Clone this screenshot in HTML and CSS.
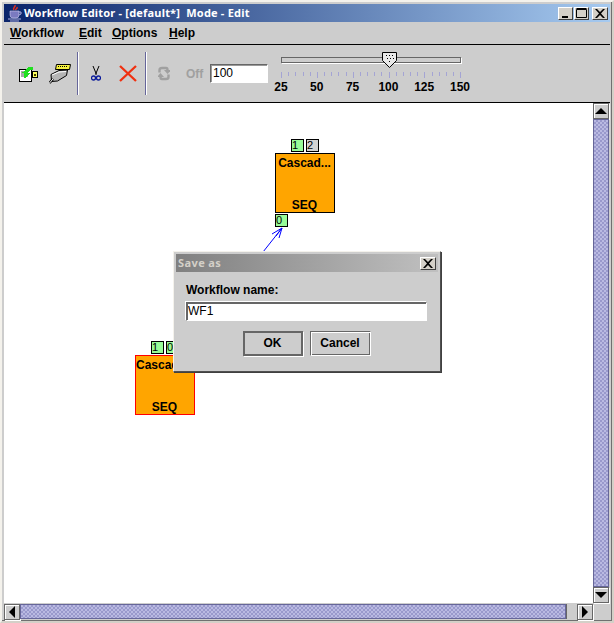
FILE: index.html
```html
<!DOCTYPE html>
<html>
	<head>
		<meta charset="UTF-8">
		<title>Workflow Editor</title>
		<link rel="stylesheet" href="styles.css">
	</head>
	<body>
		<div class="window">
			<div class="titlebar">
				<svg class="java-logo" width="16" height="18" viewBox="0 0 16 18">
					<path d="M8 1c1 2-3 3-1 5M10 3c1 2-2 2-1 3" fill="none" stroke="#e03020" stroke-width="1.500"/>
					<path d="M3 7h9v4q0 3-3 3H6q-3 0-3-3z" fill="#7a7ac0" stroke="#d0d0f0" stroke-width=".6"/>
					<path d="M12 8h2v2l-2 1M1 15h13M3 17h9" fill="none" stroke="#b0b0e0"/>
				</svg>
				<span class="title-text">Workflow Editor - [default*]&nbsp; Mode - Edit</span>
				<div class="win-btns">
					<div class="win-btn"><svg width="10" height="9" viewBox="0 0 10 9"><path d="M1 7h6v2H1z"/></svg></div>
					<div class="win-btn max"><svg width="11" height="10" viewBox="0 0 11 10"><path d="M.5 1.500h10v8H.5zM.5.500h10" fill="none" stroke="#000"/></svg></div>
					<div class="win-btn close"><svg width="10" height="9" viewBox="0 0 10 9"><path d="M0 0h2l3 3 3-3h2L6 4.500 10 9H8L5 6 2 9H0l4-4.500z"/></svg></div>
				</div>
			</div>

			<div class="menubar">
				<span class="menu"><u>W</u>orkflow</span>
				<span class="menu"><u>E</u>dit</span>
				<span class="menu"><u>O</u>ptions</span>
				<span class="menu"><u>H</u>elp</span>
			</div>

			<div class="toolbar">
				<div class="tool">
					<svg width="19" height="18" viewBox="0 0 19 18" shape-rendering="crispEdges">
						<path d="M.5 4.500h12v12H.5z" fill="#fff" stroke="#000"/>
						<path d="M2 6h7v6H2z" fill="#a8a8a8"/>
						<path d="M13.500 6.500h5v6h-5z" fill="#ffff60" stroke="#000"/>
						<path d="M15 8.500h2v2h-2z" fill="#404000"/>
						<path d="M5 13V8H3V7h2V6h1V5h1V4h1V3h1V2h5v3H11v1H10v1H9v1h2v1H10v1H9v1H8v1H7v1z" fill="#20e020" shape-rendering="crispEdges"/>
					</svg>
				</div>
				<div class="tool">
					<svg width="22" height="20" viewBox="0 0 22 20">
						<path d="M7.500.500h14l-1 5h-14z" fill="#f4f040" stroke="#000"/>
						<path d="M9 2.500h1M11 2.500h1M13 2.500h1M15 2.500h1M17 2.500h1" stroke="#000" fill="none"/>
						<path d="M2 10.500l8-4 8.500-.5-1 5.500-9 5.500-6 .5z" fill="#b4b4b4" stroke="#000"/>
						<path d="M3 11l7-3 7-.5" fill="none" stroke="#fff"/>
						<path d="M4 15L.5 19" stroke="#000" stroke-width="2.500" fill="none"/>
						<path d="M4 15L.5 19" stroke="#fff" fill="none"/>
					</svg>
				</div>
				<div class="sep"></div>
				<div class="tool">
					<svg width="10" height="15" viewBox="0 0 10 15">
						<path d="M2 0l3.500 8.500M8 0L4.500 8.500" fill="none" stroke="#000"/>
						<circle cx="2.500" cy="12" r="2" fill="none" stroke="#0a1a9a" stroke-width="1.300"/>
						<circle cx="7.500" cy="12" r="2" fill="none" stroke="#0a1a9a" stroke-width="1.300"/>
					</svg>
				</div>
				<div class="tool">
					<svg width="18" height="17" viewBox="0 0 18 17">
						<path d="M1 1l16 15M17 1L1 16" fill="none" stroke="#f03010" stroke-width="2.300"/>
					</svg>
				</div>
				<div class="sep"></div>
				<div class="tool">
					<svg width="12" height="15" viewBox="0 0 12 15">
						<path d="M1.500 6.500V4Q1.500 2 4 2h4q1.500 0 1.500 2" fill="none" stroke="#a0a0a0" stroke-width="2.400"/>
						<path d="M6 4h7L9.500 8z" fill="#a0a0a0"/>
						<path d="M10.500 8.500V11q0 2-2.500 2H4q-1.500 0-1.500-2" fill="none" stroke="#a0a0a0" stroke-width="2.400"/>
						<path d="M6 11H-1L2.500 7z" fill="#a0a0a0"/>
					</svg>
				</div>
				<span class="off">Off</span>
				<div class="zoom-field">100</div>
				<div class="slider">
					<div class="track">
						<svg class="thumb" width="15" height="16" viewBox="0 0 15 16">
							<path d="M.5.500h14v8l-7 7-7-7z" fill="#e8e8e8" stroke="#000"/>
							<path d="M4 3h1v1H4zM7 3h1v1H7zM10 3h1v1h-1zM5 6h1v1H5zM8 6h1v1H8zM11 6h1v1h-1zM7 9h1v1H7z" fill="#000"/>
						</svg>
					</div>
					<svg class="ticks" width="181" height="7" viewBox="0 0 181 7" shape-rendering="crispEdges">
						<path d="M.5 0v6M7.500 0v4M14.500 0v4M22.500 0v4M29.500 0v4M36.500 0v6M43.500 0v4M50.500 0v4M57.500 0v4M65.500 0v4M72.500 0v6M79.500 0v4M86.500 0v4M93.500 0v4M100.500 0v4M108.500 0v6M115.500 0v4M122.500 0v4M129.500 0v4M136.500 0v4M143.500 0v6M151.500 0v4M158.500 0v4M165.500 0v4M172.500 0v4M179.500 0v6" stroke="#a4a4d4" fill="none"/>
					</svg>
					<div class="scale">
						<span>25</span><span>50</span><span>75</span><span>100</span><span>125</span><span>150</span>
					</div>
				</div>
			</div>

			<div class="main">
				<div class="canvas">
					<div class="port green node-a-p1">1</div>
					<div class="port gray node-a-p2">2</div>
					<div class="node node-a"><span>Cascad...</span><span>SEQ</span></div>
					<div class="port green node-a-p0">0</div>
					<svg class="link" width="30" height="30" viewBox="0 0 30 30">
						<path d="M1 28L20 4M20 4l-10 6M20 4l-3 10M20 4l-6 8" fill="none" stroke="#0000ff"/>
					</svg>
					<div class="port green node-b-p1">1</div>
					<div class="port green node-b-p2">0</div>
					<div class="node node-b"><span class="name-left">Cascad...</span><span>SEQ</span></div>
				</div>
				<div class="vscroll">
					<div class="arrow-btn"><i class="tri up"></i></div>
					<div class="thumb-bar"></div>
					<div class="arrow-btn"><i class="tri down"></i></div>
				</div>
				<div class="hscroll">
					<div class="arrow-btn"><i class="tri left"></i></div>
					<div class="thumb-bar"></div>
					<div class="h-gap"></div>
					<div class="arrow-btn"><i class="tri right"></i></div>
				</div>
			</div>

			<div class="dialog">
				<div class="dialog-title">
					<span class="dialog-name">Save as</span>
					<div class="win-btn close"><svg width="10" height="9" viewBox="0 0 10 9"><path d="M0 0h2l3 3 3-3h2L6 4.500 10 9H8L5 6 2 9H0l4-4.500z"/></svg></div>
				</div>
				<div class="dialog-body">
					<label>Workflow name:</label>
					<div class="name-field">WF1</div>
					<div class="dialog-btns">
						<div class="btn default">OK</div>
						<div class="btn cancel">Cancel</div>
					</div>
				</div>
			</div>
		</div>
	</body>
</html>
```

FILE: styles.css
```css
*{
	box-sizing: border-box;
}
html,body{
	margin: 0;
	padding: 0;
	overflow: hidden;
}
body{
	font-family: "Liberation Sans", Arial, sans-serif;
	font-size: 12px;
	font-weight: bold;
	color: black;
	background: #fff;
}
.window{
	position: relative;
	width: 614px;
	height: 623px;
	display: flex;
	flex-direction: column;
	background: #cdcdcd;
	padding: 2px;
	border: 2px solid;
	border-color: #f4f2ec #d4d0c8 #d4d0c8 #f4f2ec;
	box-shadow: inset -1px -1px 0 #707070;
}
.titlebar{
	flex: none;
	height: 18px;
	display: flex;
	align-items: center;
	padding: 0 2px 0 3px;
	background: linear-gradient(to right, #0a246a, #a6caf0);
	color: white;
}
.java-logo{
	flex: none;
	margin-right: 1px;
}
.title-text{
	font-family: "Noto Sans", sans-serif;
	font-size: 11px;
	letter-spacing: .2px;
	padding-bottom: 2px;
	white-space: pre;
}
.win-btns{
	display: flex;
	margin-left: auto;
	gap: 1px;
}
.win-btn{
	width: 15px;
	height: 13px;
	display: flex;
	align-items: center;
	justify-content: center;
	background: #d4d0c8;
	border: 1px solid;
	border-color: #fff #404040 #404040 #fff;
	color: #000;
}
.win-btn.close{
	margin-left: 2px;
	width: 16px;
}
.menubar{
	flex: none;
	height: 23px;
	display: grid;
	grid-template-columns: 69px 33px 57px auto;
	align-items: center;
	padding: 0 0 0 6px;
	border-bottom: 1px solid #000;
}
.menu u{
	text-underline-offset: 1px;
}
.toolbar{
	flex: none;
	height: 58px;
	display: flex;
	align-items: center;
	padding-left: 8px;
	border-bottom: 1px solid #000;
}
.tool{
	flex: none;
	width: 32px;
	display: flex;
	justify-content: center;
}
.sep{
	flex: none;
	width: 2px;
	height: 43px;
	margin: 0 1px 0 1px;
	background: #66669a;
	border-right: 1px solid #fff;
}
.off{
	color: #a0a0a0;
	margin-left: 6px;
	width: 24px;
}
.zoom-field{
	flex: none;
	width: 58px;
	height: 19px;
	line-height: 17px;
	padding-left: 2px;
	background: #fff;
	border: 1px solid;
	border-color: #666 #fff #fff #666;
	font-weight: normal;
	font-size: 12px;
	box-shadow: 1px 1px 0 #999 inset;
}
.slider{
	flex: none;
	margin-left: 2px;
	align-self: flex-start;
	padding-top: 12px;
}
.track{
	position: relative;
	width: 180px;
	height: 6px;
	margin-left: 11px;
	background: #cdcdcd;
	border: 1px solid #666;
	box-shadow: 1px 1px 0 #fff;
}
.thumb{
	position: absolute;
	left: 100px;
	top: -6px;
}
.ticks{
	display: block;
	margin: 9px 0 0 11px;
}
.scale{
	display: grid;
	grid-template-columns: repeat(6, 22px);
	column-gap: 13.8px;
	margin-top: 1px;
	line-height: 14px;
	text-align: center;
}
.scale span{
	white-space: nowrap;
	justify-self: center;
}
.main{
	flex: 1;
	min-height: 0;
	display: grid;
	grid-template-columns: 589px 16px;
	grid-template-rows: 500px 16px;
}
.canvas{
	position: relative;
	background: #fff;
	overflow: hidden;
}
.port{
	position: absolute;
	width: 13px;
	height: 13px;
	border: 1px solid #000;
	font-weight: normal;
	font-size: 11px;
	line-height: 10px;
}
.green{
	background: #98fb98;
}
.gray{
	background: #d3d3d3;
}
.node{
	position: absolute;
	width: 60px;
	height: 60px;
	display: flex;
	flex-direction: column;
	justify-content: space-between;
	align-items: center;
	padding: 2px 1px 0 0;
	line-height: 14px;
	background: #ffa500;
	border: 1px solid #000;
	white-space: nowrap;
}
.name-left{
	align-self: flex-start;
}
.node-a{
	left: 271px;
	top: 50px;
}
.node-a-p1{
	left: 287px;
	top: 36px;
}
.node-a-p2{
	left: 302px;
	top: 36px;
}
.node-a-p0{
	left: 271px;
	top: 111px;
}
.link{
	position: absolute;
	left: 258px;
	top: 121px;
}
.node-b{
	left: 131px;
	top: 252px;
	border-color: #ff0000;
}
.node-b-p1{
	left: 147px;
	top: 238px;
}
.node-b-p2{
	left: 162px;
	top: 238px;
}
.vscroll{
	display: flex;
	flex-direction: column;
	background: #cdcdcd;
}
.hscroll{
	grid-column: 1 / 2;
	display: flex;
	background: #cdcdcd;
	padding-top: 1px;
}
.arrow-btn{
	flex: none;
	width: 16px;
	height: 16px;
	display: flex;
	align-items: center;
	justify-content: center;
	background: #cdcdcd;
	border: 1px solid #666;
	box-shadow: 1px 1px 0 #fff inset, 1px 1px 0 #fff;
}
.thumb-bar{
	flex: 1;
	border: 1px solid #666699;
	background:
		radial-gradient(circle at 1px 1px, #bcbce4 .7px, transparent .8px) 0 0/4px 4px,
		radial-gradient(circle at 1px 1px, #bcbce4 .7px, transparent .8px) 2px 2px/4px 4px,
		#9999cc;
}
.h-gap{
	flex: none;
	width: 11px;
	background: #cdcdcd;
	border-left: 1px solid #666;
}
.tri{
	display: block;
	width: 0;
	height: 0;
	border-style: solid;
	border-color: transparent;
}
.tri.up{
	border-width: 0 6px 6px;
	border-bottom-color: #000;
}
.tri.down{
	border-width: 6px 6px 0;
	border-top-color: #000;
}
.tri.left{
	border-width: 6px 6px 6px 0;
	border-right-color: #000;
}
.tri.right{
	border-width: 6px 0 6px 6px;
	border-left-color: #000;
}
.dialog{
	position: absolute;
	left: 171px;
	top: 249px;
	width: 268px;
	height: 121px;
	padding: 2px;
	background: #cdcdcd;
	border: 1px solid;
	border-color: #f4f2ec #505050 #505050 #f4f2ec;
	box-shadow: 1px 1px 0 #404040;
}
.dialog-title{
	height: 18px;
	display: flex;
	align-items: center;
	justify-content: space-between;
	padding: 0 2px;
	background: linear-gradient(to right, #808080, #c0c0c0);
	color: #d4d0c8;
}
.dialog-name{
	font-family: "Noto Sans", sans-serif;
	font-size: 11px;
	letter-spacing: .4px;
	padding-bottom: 2px;
}
.dialog-body{
	display: flex;
	flex-direction: column;
	padding: 11px 11px 0 10px;
}
.dialog-body label{
	line-height: 14px;
}
.name-field{
	height: 19px;
	margin-top: 5px;
	line-height: 17px;
	padding-left: 1px;
	background: #fff;
	border: 1px solid;
	border-color: #666 #fff #fff #666;
	box-shadow: -1px -1px 0 0 #fff, 1px 1px 0 0 #666 inset;
	font-weight: normal;
}
.dialog-btns{
	display: flex;
	justify-content: center;
	gap: 7px;
	margin-top: 10px;
}
.btn{
	width: 60px;
	height: 25px;
	line-height: 22px;
	text-align: center;
	border: 1px solid;
	border-color: #666 #fff #fff #666;
	box-shadow: 1px 1px 0 #fff inset, -1px -1px 0 #666 inset;
}
.btn.cancel{
	width: 61px;
}
.btn.default{
	border: 2px solid #666;
	box-shadow: 1px 1px 0 #fff;
	line-height: 21px;
}
```
